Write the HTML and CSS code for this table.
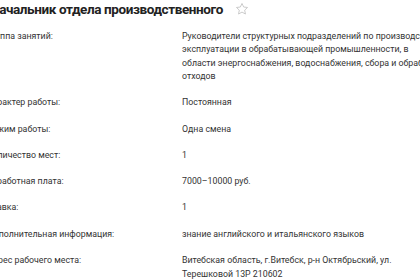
FILE: index.html
```html
<!DOCTYPE html>
<html lang="ru">
<head>
<meta charset="utf-8">
<link rel="stylesheet" href="styles.css">
</head>
<body>
<div class="page">
  <div class="title-row">
    <h1 class="title">Начальник отдела производственного</h1>
    <svg class="star" width="14" height="14" viewBox="0 0 24 24"><path d="M12 2.5l2.9 6.1 6.6.8-4.9 4.6 1.3 6.6L12 17.3l-5.9 3.3 1.3-6.6-4.9-4.6 6.6-.8z" fill="none" stroke="#c4c4c4" stroke-width="1.5" stroke-linejoin="round"/></svg>
  </div>
  <dl class="info">
    <dt>Группа занятий:</dt>
    <dd>Руководители структурных подразделений по производству и эксплуатации в обрабатывающей промышленности, в области энергоснабжения, водоснабжения, сбора и обработки отходов</dd>
    <dt>Характер работы:</dt>
    <dd>Постоянная</dd>
    <dt>Режим работы:</dt>
    <dd>Одна смена</dd>
    <dt>Количество мест:</dt>
    <dd>1</dd>
    <dt>Заработная плата:</dt>
    <dd>7000–10000 руб.</dd>
    <dt>Ставка:</dt>
    <dd>1</dd>
    <dt>Дополнительная информация:</dt>
    <dd>знание английского и итальянского языков</dd>
    <dt>Адрес рабочего места:</dt>
    <dd>Витебская область, г.Витебск, р-н Октябрьский, ул. Терешковой 13Р 210602</dd>
  </dl>
</div>
</body>
</html>
```
FILE: styles.css
```css
html, body {
  margin: 0;
  padding: 0;
  overflow: hidden;
  background: #fff;
}
body {
  font-family: Roboto, "Noto Sans", sans-serif;
  color: #333;
}
.page {
  margin-left: -13px;
  width: 500px;
}
.title-row {
  display: flex;
  align-items: center;
  gap: 12px;
  height: 18px;
  padding-left: 3px;
}
.title {
  margin: 0;
  font-size: 13.5px;
  font-weight: 700;
  letter-spacing: -0.4px;
  line-height: 18px;
  color: #222;
  white-space: nowrap;
}
.star {
  flex: none;
}
.info {
  display: grid;
  grid-template-columns: 195px 260px;
  row-gap: 12.8px;
  margin: 11.5px 0 0;
  font-size: 8.8px;
  line-height: 13.5px;
}
.info dt,
.info dd {
  margin: 0;
}
```
